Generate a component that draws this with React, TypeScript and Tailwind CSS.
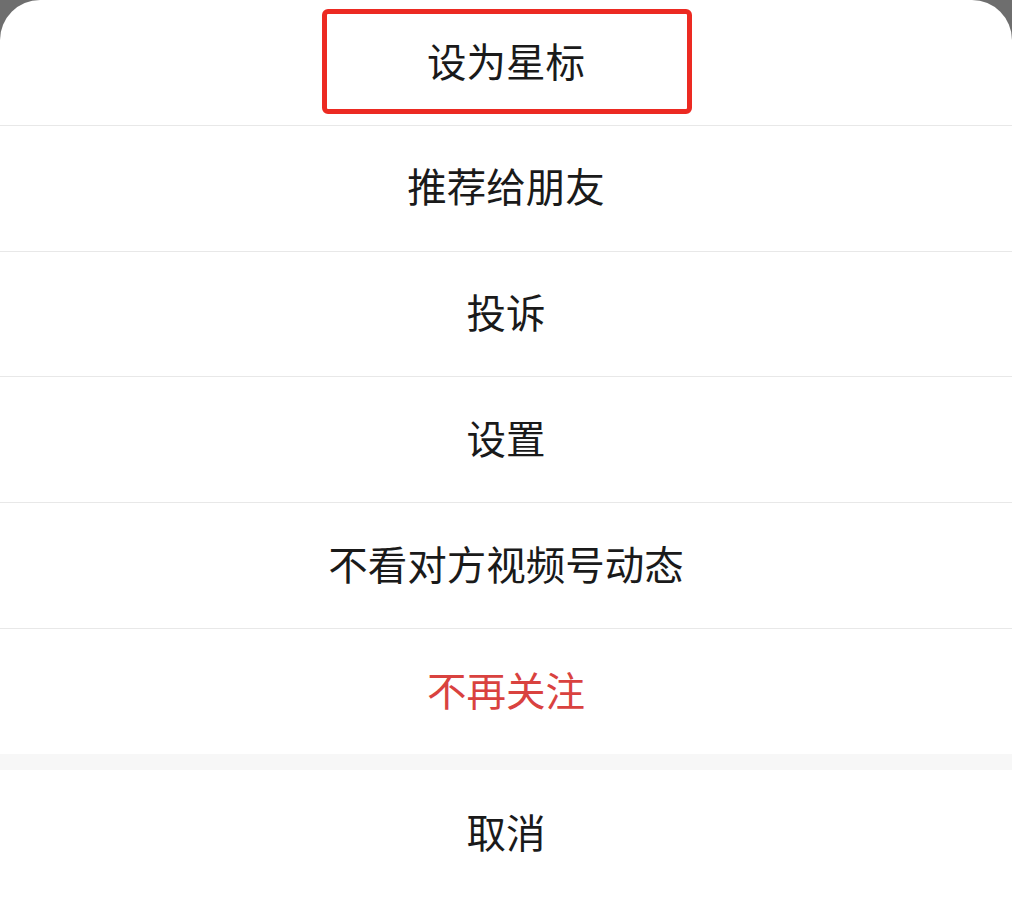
const items = [
  { label: '设为星标', highlighted: true },
  { label: '推荐给朋友' },
  { label: '投诉' },
  { label: '设置' },
  { label: '不看对方视频号动态' },
  { label: '不再关注', danger: true },
]

export default function App() {
  return (
    <div
      className="h-[912px] w-full overflow-hidden bg-[#6e6e6e]"
      style={{ fontFamily: '"Noto Sans CJK SC", "Noto Sans", sans-serif' }}
    >
      <div className="flex h-full flex-col overflow-hidden rounded-t-[40px] bg-white">
        {items.map((item) => (
          <div
            key={item.label}
            className={`relative flex shrink-0 items-center justify-center pb-[6px] ${item.danger ? 'h-[125px]' : 'h-[125.75px] border-b border-[#e8e8e8]'}`}
          >
            {item.highlighted && (
              <div className="absolute top-[9px] left-[322px] h-[105px] w-[370px] rounded-[6px] border-[5px] border-[#ec2a22]" />
            )}
            <span
              className={`text-[39.5px] leading-none ${item.danger ? 'text-[#d9423f]' : 'text-[#1a1a1a]'}`}
            >
              {item.label}
            </span>
          </div>
        ))}
        <div className="h-[16px] shrink-0 bg-[#f7f7f7]" />
        <div className="flex h-[128px] shrink-0 items-center justify-center pb-[6px]">
          <span className="text-[39.5px] leading-none text-[#1a1a1a]">取消</span>
        </div>
        <div className="flex-1" />
      </div>
    </div>
  )
}
